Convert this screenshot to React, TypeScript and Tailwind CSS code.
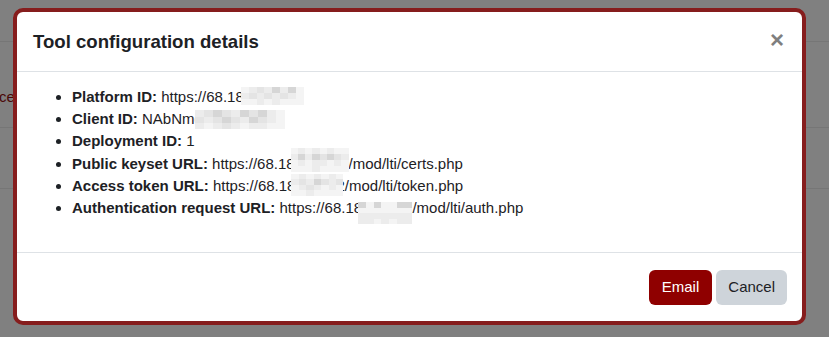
import React from 'react'

const font = { fontFamily: '"Liberation Sans", Arial, sans-serif' }

// pixelated redaction block, laid over the text line without changing its height
function Mosaic({ w, h, dy, cells }: { w: number; h: number; dy: number; cells: string[][] }) {
  return (
    <span className="relative inline-block h-[15px] align-[-2px]" style={{ width: w }}>
      <span
        className="absolute left-0 grid"
        style={{ top: dy, width: w, height: h, gridTemplateColumns: `repeat(${cells[0].length}, 1fr)`, gridTemplateRows: `repeat(${cells.length}, 1fr)` }}
      >
        {cells.flat().map((c, i) => (
          <span key={i} style={{ background: c }} />
        ))}
      </span>
    </span>
  )
}

const a = '#f4f4f4'
const b = '#e4e4e4'
const c = '#d6d6d6'
const d = '#ececec'

export default function App() {
  const items = [
    { label: 'Platform ID:', before: 'https://68.18', blur: { w: 63, h: 18, dy: -2, cells: [[a, d, b, d, c, d, c, a], [d, b, d, b, d, b, d, a], [a, a, d, a, d, a, a, a]] }, after: '', ml: -3 },
    { label: 'Client ID:', before: 'NAbNmg', blur: { w: 90, h: 19, dy: -1, cells: [[d, b, c, b, d, c, b, c, d, a], [b, d, b, c, b, d, c, b, d, a], [d, a, d, b, d, a, d, d, a, a]] }, after: '', ml: -8 },
    { label: 'Deployment ID:', before: '1', blur: null, after: '' },
    { label: 'Public keyset URL:', before: 'https://68.18', blur: { w: 58, h: 24, dy: -8, cells: [[a, d, a, d, a, d, a, a], [d, c, d, c, b, c, b, d], [a, d, a, d, d, a, d, a], [a, a, a, d, a, a, a, a]] }, after: '/mod/lti/certs.php', ml: -4 },
    { label: 'Access token URL:', before: 'https://68.18', blur: { w: 52, h: 22, dy: -4, cells: [[a, d, a, d, a, d, a], [d, b, d, c, b, d, b], [a, d, b, d, a, d, a], [a, a, d, a, a, a, a]] }, after: '2/mod/lti/token.php', ml: -4, mr: -7 },
    { label: 'Authentication request URL:', before: 'https://68.18', blur: { w: 54, h: 22, dy: 2, cells: [[c, a, c, a, a, c, c], [a, a, a, a, a, a, a], [d, d, d, d, d, d, d], [d, d, a, d, a, d, d]] }, after: '2/mod/lti/auth.php', ml: -4, mr: -8 },
  ]

  return (
    <div className="relative w-[829px] h-[337px] overflow-hidden bg-[#808080]" style={font}>
      {/* dimmed page behind the dialog */}
      <div className="flex flex-col">
        <div className="h-[42px] border-b border-[#767676]" />
        <div className="h-[86px] border-b border-[#767676] pt-[45px]">
          <span className="block text-[15px] leading-[20px] text-[#4a0808] -ml-[1px]">ce</span>
        </div>
        <div className="h-[61px] border-b border-[#767676]" />
      </div>

      {/* dialog */}
      <div className="absolute left-[13px] top-[8px] w-[793px] h-[317px] rounded-[10px] border-4 border-[#861d1d] bg-white flex flex-col overflow-hidden">
        <div className="h-[60px] shrink-0 flex items-center justify-between pl-4 pr-[18px] border-b border-[#dee2e6]">
          <h5 className="text-[18.6px] font-bold text-[#1d2125] pt-[1px]">Tool configuration details</h5>
          <span className="text-[24px] font-bold leading-none text-[#7f7f7f] -mt-[3px]">×</span>
        </div>
        <div className="h-[181px] shrink-0 pt-[14px] pl-[39px] border-b border-[#dee2e6]">
          <ul className="list-disc text-[15px] leading-[22.2px] text-[#1d2125] pl-[16px]">
            {items.map((it, i) => (
              <li key={i} className="whitespace-nowrap">
                <strong>{it.label}</strong> {it.before}
                {it.blur && (
                  <span className="inline-block" style={{ marginLeft: it.ml ?? -3, marginRight: it.mr ?? 0 }}>
                    <Mosaic w={it.blur.w} h={it.blur.h} dy={it.blur.dy} cells={it.blur.cells} />
                  </span>
                )}
                {it.after}
              </li>
            ))}
          </ul>
        </div>
        <div className="flex-1 flex items-center justify-end gap-1 pr-[15px]">
          <button className="h-[35px] px-[13px] rounded-[6px] bg-[#8f0000] text-white text-[15px]">Email</button>
          <button className="h-[35px] px-[12px] rounded-[6px] bg-[#ced4da] text-[#1d2125] text-[15px]">Cancel</button>
        </div>
      </div>
    </div>
  )
}
